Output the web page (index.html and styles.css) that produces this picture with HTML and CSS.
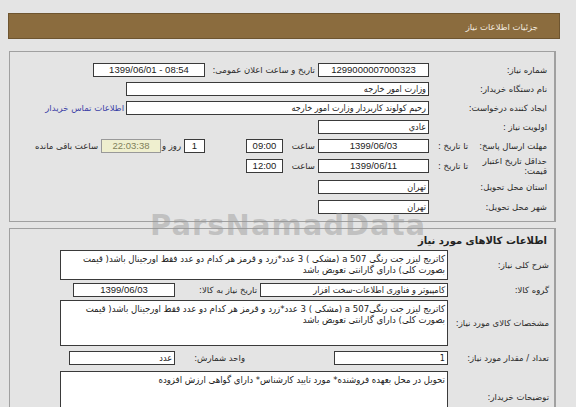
FILE: index.html
```html
<!DOCTYPE html>
<html lang="fa" dir="rtl">
<head>
    <meta charset="UTF-8">
    <title>جزئیات اطلاعات نیاز</title>
    <link rel="stylesheet" href="styles.css">
</head>
<body>
    <div class="page">
        <div class="header">جزئیات اطلاعات نیاز</div>

        <div class="panel info">
            <div class="row">
                <div class="lbl">شماره نیاز:</div>
                <div class="box num w111">1299000007000323</div>
                <div class="cell c113">تاریخ و ساعت اعلان عمومی:</div>
                <div class="box num w112">1399/06/01 - 08:54</div>
            </div>
            <div class="row">
                <div class="lbl">نام دستگاه خریدار:</div>
                <div class="box w303">وزارت امور خارجه</div>
            </div>
            <div class="row">
                <div class="lbl">ایجاد کننده درخواست:</div>
                <div class="box w303">رحیم کولوند کاربردار وزارت امور خارجه</div>
                <a class="link" href="#">اطلاعات تماس خریدار</a>
            </div>
            <div class="row">
                <div class="lbl">اولویت نیاز :</div>
                <div class="box w111">عادي</div>
            </div>
            <div class="row">
                <div class="lbl split"><span>مهلت ارسال پاسخ:</span><span>تا تاریخ :</span></div>
                <div class="box num w111">1399/06/03</div>
                <div class="cell c35">ساعت</div>
                <div class="box num w38">09:00</div>
                <div class="box num w22 days">1</div>
                <div class="cell c23">روز و</div>
                <div class="box num w60 remain">22:03:38</div>
                <div class="cell">ساعت باقی مانده</div>
            </div>
            <div class="row tall">
                <div class="lbl split"><span class="two">حداقل تاریخ اعتبار<br>قیمت:</span><span>تا تاریخ :</span></div>
                <div class="box num w111">1399/06/11</div>
                <div class="cell c35">ساعت</div>
                <div class="box num w38">12:00</div>
            </div>
            <div class="row r20">
                <div class="lbl">استان محل تحویل:</div>
                <div class="box w111">تهران</div>
            </div>
            <div class="row">
                <div class="lbl">شهر محل تحویل:</div>
                <div class="box w111">تهران</div>
            </div>
        </div>

        <div class="panel goods">
            <div class="title">اطلاعات کالاهای مورد نیاز</div>
            <div class="row area">
                <div class="lbl">شرح کلی نیاز:</div>
                <div class="box multi h30">کاتریج لیزر جت رنگی 507 a (مشکی ) 3 عدد*زرد و قرمز هر کدام دو عدد فقط اورجینال باشد( قیمت<br>بصورت کلی) دارای گارانتی تعویض باشد</div>
            </div>
            <div class="row">
                <div class="lbl">گروه کالا:</div>
                <div class="box w188">کامپیوتر و فناوری اطلاعات-سخت افزار</div>
                <div class="cell c85">تاریخ نیاز به کالا:</div>
                <div class="box num w102">1399/06/03</div>
            </div>
            <div class="row area">
                <div class="lbl">مشخصات کالای مورد نیاز:</div>
                <div class="box multi h46">کاتریج لیزر جت رنگی507 a (مشکی ) 3 عدد*زرد و قرمز هر کدام دو عدد فقط اورجینال باشد( قیمت<br>بصورت کلی) دارای گارانتی تعویض باشد</div>
            </div>
            <div class="row r24">
                <div class="lbl">تعداد / مقدار مورد نیاز:</div>
                <div class="box w114">1</div>
                <div class="cell c159">واحد شمارش:</div>
                <div class="box w106">عدد</div>
            </div>
            <div class="row area">
                <div class="lbl">توضیحات خریدار:</div>
                <div class="box multi h52">تحویل در محل بعهده فروشنده* مورد تایید کارشناس* دارای گواهی ارزش افزوده</div>
            </div>
        </div>

        <div class="mark">ParsNamadData</div>
    </div>
</body>
</html>
```

FILE: styles.css
```css
* {
    box-sizing: border-box;
}

body {
    margin: 0;
    background-color: #e4e4e4;
    font-family: "DejaVu Sans", sans-serif;
    font-size: 8.5px;
    color: #222;
    overflow: hidden;
}

.page {
    position: relative;
    padding: 13px 16px 0 8px;
}

.header {
    height: 26px;
    line-height: 26px;
    padding-right: 21px;
    background-color: #8b6c3e;
    border: 1px solid #6e5530;
    color: #f4ede0;
    font-size: 8.5px;
}

.panel {
    margin: 12px 4px 0 1px;
    border: 1px solid #a0a0a0;
    border-right-width: 2px;
}

.info {
    padding: 8px 7px 5px 0;
}

.goods {
    margin-top: 6px;
    padding: 0 5px 0 0;
}

.row {
    display: flex;
    align-items: center;
    height: 19px;
}

.row.tall {
    height: 22px;
}

.row.r20 {
    height: 20px;
}

.row.r24 {
    height: 24px;
}

.row.area {
    height: auto;
    padding-top: 1px;
}

.lbl {
    flex: none;
    width: 118px;
    white-space: nowrap;
    color: #2a2a2a;
}

.goods .lbl {
    width: 101px;
}

.lbl.split {
    display: flex;
    justify-content: space-between;
    align-items: center;
    padding-left: 9px;
}

.lbl .two {
    line-height: 10px;
}

.title {
    height: 20px;
    line-height: 23px;
    padding-right: 2px;
    font-size: 10px;
    font-weight: bold;
    color: #222;
}

.box {
    flex: none;
    height: 14px;
    line-height: 12px;
    padding: 0 2px;
    background-color: #fff;
    border: 1px solid #3a3a3a;
    font-family: "DejaVu Sans Condensed", "DejaVu Sans", sans-serif;
    font-size: 9px;
    white-space: nowrap;
    overflow: hidden;
    color: #222;
}

.box.num {
    direction: ltr;
    text-align: center;
    font-family: "Liberation Sans", sans-serif;
    font-size: 9.5px;
}

.box.multi {
    width: 388px;
    padding: 2px 2px;
    line-height: 11px;
    white-space: normal;
    font-size: 9.5px;
}

.h30 { height: 30px; }
.h46 { height: 46px; }
.h52 { height: 52px; }

.w22 { width: 21px; }
.w38 { width: 37px; }
.w60 { width: 60px; }
.w102 { width: 102px; }
.w106 { width: 106px; }
.w111 { width: 111px; }
.w112 { width: 112px; }
.w114 { width: 114px; }
.w188 { width: 188px; }
.w303 { width: 303px; }

.cell {
    flex: none;
    padding-right: 3px;
    white-space: nowrap;
    color: #2a2a2a;
}

.c23 { width: 23px; }
.c35 { width: 35px; }
.c85 { width: 85px; }
.c113 { width: 113px; }
.c159 {
    width: 159px;
    padding-right: 89px;
}

.days {
    margin-right: 41px;
}

.remain {
    background-color: #efefcf;
    color: #7f7f5a;
    border-color: #999;
}

.link {
    margin-right: 2px;
    color: #3b3fa6;
    text-decoration: none;
}

.mark {
    position: absolute;
    top: 215px;
    left: 150px;
    font-size: 29px;
    line-height: 20px;
    font-weight: bold;
    letter-spacing: 1px;
    color: rgba(150, 150, 150, 0.45);
    direction: ltr;
    pointer-events: none;
}
```
